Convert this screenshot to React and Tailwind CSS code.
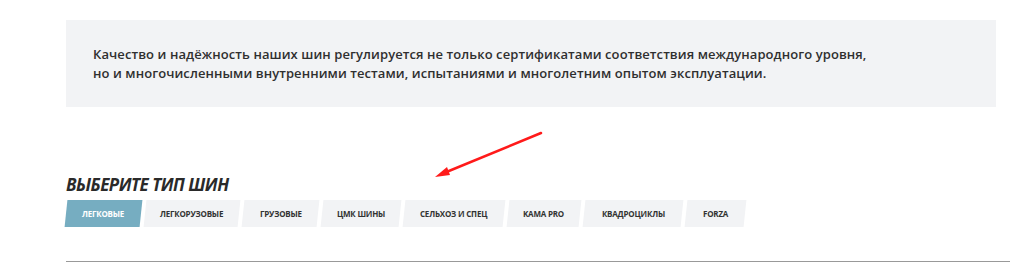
const TABS = [
  { label: 'Легковые', w: 'w-[75px]', active: true },
  { label: 'Легкорузовые', w: 'w-[94px]' },
  { label: 'Грузовые', w: 'w-[75px]' },
  { label: 'ЦМК шины', w: 'w-[78px]' },
  { label: 'Сельхоз и спец', w: 'w-[100px]' },
  { label: 'Kama Pro', w: 'w-[72px]' },
  { label: 'Квадроциклы', w: 'w-[98px]' },
  { label: 'Forza', w: 'w-[59px]' },
];

const App = () => {
  return (
    <div className="relative w-[1024px] h-[274px] bg-white pt-[20px] pl-[66px] font-['Open_Sans','Noto_Sans',sans-serif] overflow-hidden">
      {/* блок с текстом */}
      <div className="w-[930px] h-[87px] bg-[#f2f3f5] pl-[27px] flex flex-col justify-center pt-[1px]">
        <p className="text-[13px] leading-[19px] font-semibold text-[#2f2f2f] tracking-[0.08px]">
          Качество и надёжность наших шин регулируется не только сертификатами соответствия международного уровня,
          <br />
          но и многочисленными внутренними тестами, испытаниями и многолетним опытом эксплуатации.
        </p>
      </div>

      {/* стрелка */}
      <svg className="absolute left-[430px] top-[128px]" width="120" height="56" viewBox="430 128 120 56">
        <line x1="541" y1="133" x2="444" y2="173" stroke="#ff1a1a" strokeWidth="2.5" strokeLinecap="round" />
        <polygon points="435,177 447,167 450,175" fill="#ff1a1a" />
      </svg>

      <h2 className="mt-[67px] text-[17px] leading-[22px] font-bold italic uppercase text-[#2a2a2a] tracking-[-0.5px]">
        Выберите тип шин
      </h2>

      {/* табы */}
      <div className="mt-[4px] flex gap-[4px]">
        {TABS.map((tab) => (
          <div
            key={tab.label}
            className={`${tab.w} h-[27px] -skew-x-6 flex items-center justify-center ${tab.active ? 'bg-[#76adc1]' : 'bg-[#f2f3f5]'}`}
          >
            <span
              className={`skew-x-6 text-[8px] font-bold uppercase tracking-[-0.2px] ${tab.active ? 'text-white' : 'text-[#333333]'}`}
            >
              {tab.label}
            </span>
          </div>
        ))}
      </div>

      <div className="mt-[34px] w-[944px] h-[1px] bg-[#999999]" />
    </div>
  );
};

export default App;
